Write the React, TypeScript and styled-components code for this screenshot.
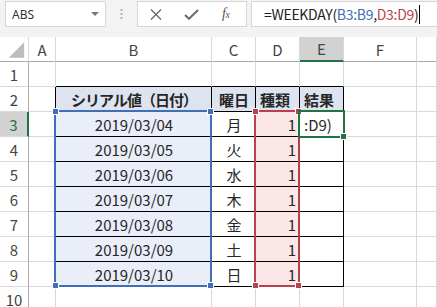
import React from "react";
import styled, { createGlobalStyle } from "styled-components";

const GlobalStyle = createGlobalStyle`
  html, body { margin: 0; padding: 0; background: #ffffff; }
  body { font-family: "Noto Sans CJK JP", "Noto Sans", sans-serif; }
`;

const Root = styled.div`
  width: 437px;
  height: 307px;
  overflow: hidden;
  background: #ffffff;
  position: relative;
`;

const Toolbar = styled.div`
  height: 37px;
  background: #f3f3f3;
  display: flex;
  align-items: flex-start;
  padding: 1px 0 0 5px;
  box-sizing: border-box;
`;

const NameBox = styled.div`
  width: 101px;
  height: 26px;
  box-sizing: border-box;
  border: 1px solid #d6d6d6;
  background: #ffffff;
  display: flex;
  align-items: center;
  justify-content: space-between;
  padding: 0 6px 0 6px;
  font-family: "Noto Sans", "Liberation Sans", sans-serif;
  font-size: 12px;
  color: #333333;
`;

const DropArrow = styled.span`
  width: 0;
  height: 0;
  border-left: 4px solid transparent;
  border-right: 4px solid transparent;
  border-top: 4px solid #7a7a7a;
`;

const Grip = styled.div`
  width: 31px;
  height: 26px;
  display: flex;
  align-items: center;
  justify-content: center;
`;

const ButtonBox = styled.div`
  width: 110px;
  height: 26px;
  box-sizing: border-box;
  border: 1px solid #d6d6d6;
  background: #ffffff;
  display: flex;
  align-items: center;
  padding-left: 12px;
`;

const IconSlot = styled.div<{ $w: number }>`
  width: ${(p) => p.$w}px;
  display: flex;
  align-items: center;
  justify-content: flex-start;
`;

const Fx = styled.span`
  font-family: "Liberation Serif", serif;
  font-style: italic;
  font-size: 14px;
  color: #555555;
  letter-spacing: -0.5px;
  & > small { font-size: 10px; }
`;

const InputBox = styled.div`
  flex: 1;
  margin-left: 4px;
  height: 26px;
  box-sizing: border-box;
  border: 1px solid #d6d6d6;
  border-right: none;
  background: #ffffff;
  display: flex;
  align-items: center;
  padding-left: 12px;
  font-size: 14px;
  letter-spacing: -0.3px;
  color: #222222;
  white-space: nowrap;
`;

const Ref = styled.span<{ $c: string }>`
  color: ${(p) => p.$c};
`;

const Caret = styled.span`
  display: inline-block;
  width: 1px;
  height: 19px;
  background: #000000;
  margin-left: 1px;
`;

const Sheet = styled.div`
  position: relative;
  display: grid;
  grid-template-columns: 29px 27px 156px 44px 44px 44px 73px 20px;
  grid-auto-rows: 25px;
`;

const Cell = styled.div<{
  $bg?: string;
  $r?: string;
  $b?: string;
  $align?: "left" | "center" | "right";
  $bold?: boolean;
  $color?: string;
  $rw?: number;
  $bw?: number;
}>`
  box-sizing: border-box;
  background: ${(p) => p.$bg || "#ffffff"};
  border-right: ${(p) => p.$rw || 1}px solid ${(p) => p.$r || "#d9d9d9"};
  border-bottom: ${(p) => p.$bw || 1}px solid ${(p) => p.$b || "#d9d9d9"};
  display: flex;
  align-items: center;
  justify-content: ${(p) =>
    p.$align === "left" ? "flex-start" : p.$align === "right" ? "flex-end" : "center"};
  padding: 0 3px 0 4px;
  font-size: 15px;
  font-weight: ${(p) => (p.$bold ? 700 : 400)};
  color: ${(p) => p.$color || "#262626"};
  white-space: nowrap;
  overflow: visible;
  line-height: 1;
`;

const HeadCell = styled(Cell)`
  padding: 0;
  color: ${(p) => p.$color || "#444444"};
`;

const Tight = styled.span`
  letter-spacing: -1px;
`;

const Range = styled.div<{ $c: string }>`
  position: absolute;
  box-sizing: border-box;
  border: 2px solid ${(p) => p.$c};
  pointer-events: none;
`;

const Handle = styled.div<{ $c: string; $x: "l" | "r"; $y: "t" | "b" }>`
  position: absolute;
  width: 5px;
  height: 5px;
  background: ${(p) => p.$c};
  outline: 1px solid #ffffff;
  ${(p) => (p.$x === "l" ? "left: -3px;" : "right: -3px;")}
  ${(p) => (p.$y === "t" ? "top: -3px;" : "bottom: -3px;")}
`;

const GRID = "#d9d9d9";
const HEADLINE = "#ababab";
const BLACK = "#000000";
const HEAD_FILL = "#dde4f0";
const BLUE_FILL = "#e9eef8";
const PINK_FILL = "#fbe6e8";
const SEL_HEAD = "#d2d2d2";
const GREEN = "#217346";
const BLUE = "#3e6fb8";
const RED = "#b8404f";

const cols = ["A", "B", "C", "D", "E", "F", ""];
const dates = [
  "2019/03/04",
  "2019/03/05",
  "2019/03/06",
  "2019/03/07",
  "2019/03/08",
  "2019/03/09",
  "2019/03/10",
];
const days = ["月", "火", "水", "木", "金", "土", "日"];
const headers: Record<string, React.ReactNode> = {
  B: <Tight>シリアル値（日付）</Tight>,
  C: "曜日",
  D: "種類",
  E: "結果",
};

function CornerTriangle() {
  return (
    <svg width="29" height="25" viewBox="0 0 29 25">
      <polygon points="25,5 25,21 9,21" fill="#bdbdbd" />
    </svg>
  );
}

function renderRow(r: number) {
  const cells: React.ReactNode[] = [];
  const inTable = r >= 2 && r <= 9;
  const selRow = r === 3;
  cells.push(
    <HeadCell
      key={`h${r}`}
      $bg={selRow ? SEL_HEAD : "#ffffff"}
      $r={selRow ? GREEN : HEADLINE}
      $rw={selRow ? 2 : 1}
      $b={GRID}
      $color={selRow ? GREEN : undefined}
    >
      {r}
    </HeadCell>
  );
  for (let c = 0; c < 7; c++) {
    const col = cols[c];
    let bg: string | undefined;
    let right = GRID;
    let bottom = GRID;
    let content: React.ReactNode = null;
    let align: "left" | "center" | "right" = "center";
    let bold = false;
    const tableCol = col === "B" || col === "C" || col === "D" || col === "E";
    if (r === 1 && tableCol) bottom = BLACK;
    if (inTable && col === "A") right = BLACK;
    if (inTable && tableCol) {
      right = BLACK;
      bottom = BLACK;
    }
    if (r === 2 && tableCol) {
      bg = HEAD_FILL;
      bold = true;
      content = headers[col];
      align = col === "B" || col === "C" ? "center" : "left";
    }
    if (r >= 3 && r <= 9) {
      const i = r - 3;
      if (col === "B") {
        bg = BLUE_FILL;
        content = dates[i];
      } else if (col === "C") {
        content = days[i];
      } else if (col === "D") {
        bg = PINK_FILL;
        content = "1";
        align = "right";
      } else if (col === "E" && r === 3) {
        content = ":D9)";
        align = "left";
      }
    }
    cells.push(
      <Cell
        key={`${r}-${c}`}
        $bg={bg}
        $r={right}
        $b={bottom}
        $align={align}
        $bold={bold}
      >
        {content}
      </Cell>
    );
  }
  return cells;
}

export default function App() {
  const rows = [1, 2, 3, 4, 5, 6, 7, 8, 9, 10];
  return (
    <Root>
      <GlobalStyle />
      <Toolbar>
        <NameBox>
          <span>ABS</span>
          <DropArrow />
        </NameBox>
        <Grip>
          <svg width="3" height="10" viewBox="0 0 3 10">
            <rect x="0.5" y="0" width="2" height="2" fill="#b5b5b5" />
            <rect x="0.5" y="4" width="2" height="2" fill="#b5b5b5" />
            <rect x="0.5" y="8" width="2" height="2" fill="#b5b5b5" />
          </svg>
        </Grip>
        <ButtonBox>
          <IconSlot $w={34}>
            <svg width="12" height="11" viewBox="0 0 12 11">
              <path d="M1 0.5 L11 10.5 M11 0.5 L1 10.5" stroke="#6a6a6a" strokeWidth="1.4" />
            </svg>
          </IconSlot>
          <IconSlot $w={38}>
            <svg width="15" height="11" viewBox="0 0 15 11">
              <path d="M1 6 L5 9.8 L14 1" stroke="#6a6a6a" strokeWidth="2" fill="none" />
            </svg>
          </IconSlot>
          <IconSlot $w={20}>
            <Fx>
              f<small>x</small>
            </Fx>
          </IconSlot>
        </ButtonBox>
        <InputBox>
          =WEEKDAY(<Ref $c={BLUE}>B3:B9</Ref>,<Ref $c={RED}>D3:D9</Ref>)
          <Caret />
        </InputBox>
      </Toolbar>
      <Sheet>
        <HeadCell $r={GRID} $b={HEADLINE}>
          <CornerTriangle />
        </HeadCell>
        {cols.map((c) => (
          <HeadCell
            key={`col${c}`}
            $bg={c === "E" ? SEL_HEAD : "#ffffff"}
            $r={GRID}
            $b={c === "E" ? GREEN : HEADLINE}
            $bw={c === "E" ? 2 : 1}
          >
            {c}
          </HeadCell>
        ))}
        {rows.map((r) => renderRow(r))}
        <Range $c={BLUE} style={{ left: 54, top: 73, width: 158, height: 177 }}>
          <Handle $c={BLUE} $x="l" $y="t" />
          <Handle $c={BLUE} $x="r" $y="t" />
          <Handle $c={BLUE} $x="l" $y="b" />
          <Handle $c={BLUE} $x="r" $y="b" />
        </Range>
        <Range $c={RED} style={{ left: 254, top: 73, width: 46, height: 177 }}>
          <Handle $c={RED} $x="l" $y="t" />
          <Handle $c={RED} $x="r" $y="t" />
          <Handle $c={RED} $x="l" $y="b" />
          <Handle $c={RED} $x="r" $y="b" />
        </Range>
        <Range $c={GREEN} style={{ left: 298, top: 73, width: 47, height: 28 }}>
          <Handle $c={GREEN} $x="r" $y="b" />
        </Range>
      </Sheet>
    </Root>
  );
}
